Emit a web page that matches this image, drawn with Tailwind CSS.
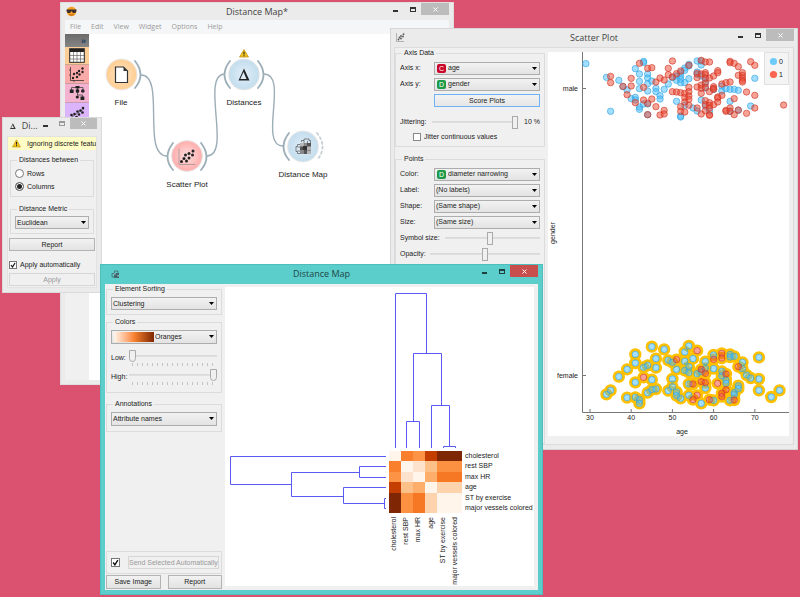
<!DOCTYPE html>
<html lang="en">
<head>
    <meta charset="UTF-8">
    <meta name="viewport" content="width=device-width, initial-scale=1.0">
    <script src="https://cdn.jsdelivr.net/npm/@tailwindcss/browser@4"></script>
    <title>Distance Map</title>
</head>
<body class="bg-[#db5170] font-['Liberation_Sans',sans-serif] text-[7px] leading-[10px] text-[#222]">
<main class="relative w-full h-screen overflow-hidden">

    <!-- Workflow window -->
    <section class="absolute left-[60px] top-[2px] w-[394px] h-[383px] bg-[#ebebeb] border border-[#dedede] flex flex-col px-1 pb-1">
        <header class="relative flex items-start justify-end h-[17px] shrink-0">
            <svg class="absolute left-[1px] top-[3px] size-[11px]" viewBox="0 0 11 11">
                <circle cx="5.500" cy="5.500" r="4.800" fill="#f5a126"/>
                <path d="M.5 3.600h10v1.200l-1 2.200H7L5.500 5 4 7H1.600L.5 4.800z" fill="#3b2f2f"/>
                <path d="M3.500 8.500q2 1.400 4 0" stroke="#a14a12" stroke-width=".8" fill="none"/>
            </svg>
            <h1 class="absolute inset-x-0 top-[3px] text-center font-['Open_Sans',sans-serif] text-[9px] leading-3 text-[#444]">Distance Map*</h1>
            <div class="relative flex">
                <button aria-label="Minimize" class="w-[17px] h-3 flex items-center justify-center"><span class="w-[5px] h-[2px] bg-[#333] mt-1"></span></button>
                <button aria-label="Maximize" class="w-[17px] h-3 flex items-center justify-center"><span class="w-[6px] h-[5px] border border-t-2 border-[#333]"></span></button>
                <button aria-label="Close" class="w-7 h-3 bg-[#bcbcbc] flex items-center justify-center"><svg class="size-[5px]" viewBox="0 0 5 5"><path d="M.5.5l4 4m0-4l-4 4" stroke="#fff"/></svg></button>
            </div>
        </header>
        <nav class="flex items-center gap-[10px] h-[14px] px-[5px] shrink-0 bg-[#f5f6f7] font-['Open_Sans',sans-serif] text-[#9b9b9b]">
            <a href="#">File</a><a href="#">Edit</a><a href="#">View</a><a href="#">Widget</a><a href="#">Options</a><a href="#">Help</a>
        </nav>
        <div class="flex flex-1 min-h-0">
            <aside class="w-6 shrink-0 bg-[#f0f0f0] flex flex-col">
                <button class="h-[13px] bg-linear-to-b from-[#6b6b6b] to-[#858585] flex items-center justify-end pr-[3px] font-bold text-[9px] text-[#1d3d63]">»</button>
                <button aria-label="Data" class="h-[18px] bg-[#fbcd97] border-b border-[#c9a98a] flex items-center justify-center">
                    <svg class="w-4 h-[15px]" viewBox="0 0 16 15"><rect x=".7" y=".7" width="14.600" height="13.600" fill="#fff" stroke="#222" stroke-width="1"/><path d="M1 1h14v3H1z" fill="#222"/><path d="M1 7.500h14M1 11h14M4.500 4v10M8 4v10M11.500 4v10" stroke="#666" stroke-width=".7"/></svg>
                </button>
                <button aria-label="Visualize" class="h-[19px] bg-[#faaaa9] border-b border-[#c99aa0] flex items-center justify-center">
                    <svg class="w-4 h-4" viewBox="0 0 16 16"><path d="M1.500 1v13.500H15M0 4h1.500M0 9h1.500M5 16v-1.500" stroke="#333" stroke-width=".8" fill="none"/><g fill="#222"><circle cx="4" cy="12" r="1.200"/><circle cx="5" cy="8" r="1.200"/><circle cx="8" cy="11" r="1.200"/><circle cx="8" cy="7" r="1.200"/><circle cx="10" cy="5" r="1.200"/><circle cx="10.500" cy="8.500" r="1.200"/><circle cx="13.500" cy="2.500" r="1.200"/><circle cx="13.500" cy="6" r="1.200"/></g></svg>
                </button>
                <button aria-label="Classify" class="h-[19px] bg-[#f3b3d0] border-b border-[#c59fb6] flex items-center justify-center">
                    <svg class="w-4 h-4" viewBox="0 0 16 16"><path d="M2.500 5V2.500H14V5M8.500 2.500V6M8.500 8v2M8 10h5.500v2" stroke="#444" stroke-width=".8" fill="none"/><g fill="#222"><rect x=".8" y="4.500" width="3.800" height="3.500"/><circle cx="8.500" cy="6" r="1.900"/><circle cx="13.800" cy="6" r="1.800"/><rect x="6.500" y="1" width="4" height="2.400"/><circle cx="8.300" cy="12" r="1.600"/><rect x="11.500" y="11.500" width="3.800" height="3.500"/></g></svg>
                </button>
                <button aria-label="Regression" class="h-[19px] bg-[#dcb4fb] flex items-center justify-center">
                    <svg class="w-4 h-4" viewBox="0 0 16 16"><path d="M1 13L15 4" stroke="#555" stroke-width=".7"/><g fill="#222"><circle cx="2.500" cy="10" r="1.300"/><circle cx="4" cy="13" r="1.300"/><circle cx="5.500" cy="9" r="1.300"/><circle cx="7.500" cy="12" r="1.300"/><circle cx="8.500" cy="6.500" r="1.300"/><circle cx="10" cy="9.500" r="1.300"/><circle cx="11.500" cy="5.500" r="1.300"/><circle cx="13.500" cy="7.500" r="1.300"/><circle cx="14" cy="3" r="1.300"/></g></svg>
                </button>
            </aside>
            <svg class="flex-1 bg-white" viewBox="89 34 360 346" preserveAspectRatio="xMinYMin slice" text-anchor="middle" font-size="8" fill="#222">
                <defs>
                    <radialGradient id="orange"><stop offset="0" stop-color="#ffe6c8"/><stop offset=".9" stop-color="#ffcf95"/><stop offset="1" stop-color="#fbd9b0"/></radialGradient>
                    <radialGradient id="red"><stop offset="0" stop-color="#ffdede"/><stop offset=".9" stop-color="#ffb1b0"/><stop offset="1" stop-color="#f8c4c4"/></radialGradient>
                    <radialGradient id="blue"><stop offset="0" stop-color="#e2eff8"/><stop offset=".9" stop-color="#c5deee"/><stop offset="1" stop-color="#d4e5f0"/></radialGradient>
                </defs>
                <g fill="none" stroke="#9caeb7" stroke-width="1.400">
                    <path d="M141 75C166 75 141 156 167 156M207 156C232 156 200 74 225 74M264 74C289 74 258 146 283 146"/>
                    <g stroke-width="1.800" stroke-linecap="round">
                        <path d="M135 61q11 14 0 27M230 61q-11 14 0 27M258 61q11 14 0 27M173 143q-11 14 0 27M201 143q11 14 0 27M289 133q-11 14 0 27"/>
                        <path d="M317 133q11 14 0 27" stroke="#c6ced3" stroke-dasharray="2 3"/>
                    </g>
                </g>
                <g stroke="#e3e3e3" stroke-width=".8">
                    <circle cx="121.500" cy="74.500" r="15.500" fill="url(#orange)"/>
                    <circle cx="244" cy="74.500" r="15.500" fill="url(#blue)"/>
                    <circle cx="187" cy="156" r="15.500" fill="url(#red)"/>
                    <circle cx="303" cy="146.500" r="15.500" fill="url(#blue)"/>
                </g>
                <path d="M115.500 67h8l4 4v11.500h-12z" fill="#fff" stroke="#333" stroke-width="1.200"/><path d="M123.500 67v4h4z" fill="#333"/>
                <path d="M244 68.500l5.500 12h-11zM243.500 72l-3.200 7h6.200z" fill="#222" fill-rule="evenodd"/>
                <path d="M244 49.500l4.500 7.500h-9z" fill="#f3c41c" stroke="#b98d0c" stroke-width=".7"/><path d="M244 51.800v2.800m0 .7v1" stroke="#222" stroke-width="1.100"/>
                <path d="M179 148.500v16h16.500" stroke="#a99" stroke-width=".9" fill="none"/>
                <g fill="#222"><circle cx="181.500" cy="161.500" r="1.500"/><circle cx="184" cy="158.500" r="1.500"/><circle cx="186.500" cy="161" r="1.500"/><circle cx="185.500" cy="155" r="1.500"/><circle cx="189" cy="153.500" r="1.500"/><circle cx="189" cy="158" r="1.500"/><circle cx="193" cy="151" r="1.500"/><circle cx="192.500" cy="155" r="1.500"/></g>
                <g>
                    <path d="M301.500 142v-1.500h2.500v-1.500h5v1.500h1.500v2.500M304 140.500v2.500M307.500 141v2M300 144.500h-2.500v2h-1.500v5h1.500v2h2.500M297.500 147h2.500M297.500 151h2.500" stroke="#666" stroke-width=".8" fill="none"/>
                    <path d="M300 143h11v11h-11z" fill="#888"/><path d="M300 143h4v3h-4zM307 147h4v3h-4zM307 151h4v3h-4z" fill="#b5b5b5"/><path d="M300 147h3v3h-3zM304 150h3v4h-3zM307 143h4v3h-4z" fill="#555"/><path d="M303 146h4v4h-4z" fill="#333"/>
                </g>
                <text x="121" y="105">File</text>
                <text x="244" y="105">Distances</text>
                <text x="187" y="187">Scatter Plot</text>
                <text x="303" y="177">Distance Map</text>
            </svg>
        </div>
    </section>

    <!-- Distances window -->
    <section class="absolute left-[2px] top-[117px] w-[100px] h-[176px] bg-[#ebebeb] border border-[#dadada] flex flex-col px-1 pb-1">
        <header class="flex items-start h-[18px] shrink-0 text-[#444]">
            <svg class="size-[6px] mt-[5px] ml-[3px]" viewBox="0 0 6 6"><path d="M3 0l3 6H0zM2.700 2L1.200 5.200h2.900z" fill="#333" fill-rule="evenodd"/></svg>
            <h2 class="ml-[6px] mt-[2px] flex-1 font-['Open_Sans',sans-serif] text-[9px] leading-3">Di...</h2>
            <button aria-label="Minimize" class="w-[17px] h-[11px] flex items-center justify-center"><span class="w-[5px] h-[2px] bg-[#333] mt-1"></span></button>
            <button aria-label="Maximize" class="w-[17px] h-[11px] flex items-center justify-center"><span class="w-[6px] h-[5px] border border-t-2 border-[#999]"></span></button>
            <button aria-label="Close" class="w-7 h-[11px] bg-[#bcbcbc] flex items-center justify-center"><svg class="size-[5px]" viewBox="0 0 5 5"><path d="M.5.5l4 4m0-4l-4 4" stroke="#fff"/></svg></button>
        </header>
        <div class="flex-1 bg-[#f0f0f0] border border-[#e2e2e2] flex flex-col">
            <p class="h-[13px] shrink-0 bg-[#fffcc6] flex items-center gap-[6px] pl-1 whitespace-nowrap overflow-hidden">
                <svg class="size-[9px] shrink-0" viewBox="0 0 9 9"><path d="M4.500.8L8.500 8h-8z" fill="#f3c41c" stroke="#b98d0c" stroke-width=".6"/><path d="M4.500 3v2.600m0 .6v1" stroke="#222"/></svg>
                Ignoring discrete featu
            </p>
            <fieldset class="mx-[2px] mt-[5px] h-[42px] border border-[#dcdcdc] px-1 pt-[2px] flex flex-col">
                <legend class="ml-[2px] px-[2px]">Distances between</legend>
                <label class="flex items-center gap-[3px] h-[13px]"><input type="radio" name="between" class="appearance-none size-[9px] rounded-full border border-[#777] bg-white checked:bg-[#222] checked:shadow-[inset_0_0_0_1px_#fff]">Rows</label>
                <label class="flex items-center gap-[3px] h-[13px]"><input type="radio" name="between" checked class="appearance-none size-[9px] rounded-full border border-[#777] bg-white checked:bg-[#222] checked:shadow-[inset_0_0_0_1px_#fff]">Columns</label>
            </fieldset>
            <fieldset class="mx-[2px] mt-[7px] h-[30px] border border-[#dcdcdc] px-1 pt-[2px]">
                <legend class="ml-[2px] px-[2px]">Distance Metric</legend>
                <div class="relative">
                    <select aria-label="Distance Metric" class="block appearance-none w-full h-[13px] border border-[#adadad] bg-linear-to-b from-[#f2f2f2] to-[#e3e3e3] px-[1px]"><option>Euclidean</option></select>
                    <svg class="absolute right-[3px] top-[5px] w-[5px] h-[3px] pointer-events-none" viewBox="0 0 5 3"><path d="M0 0h5L2.500 3z"/></svg>
                </div>
            </fieldset>
            <button class="mx-[1px] mt-1 h-[13px] shrink-0 border border-[#b4b4b4] bg-linear-to-b from-[#f2f2f2] to-[#e3e3e3]">Report</button>
            <label class="flex items-center gap-[3px] ml-[1px] mt-[9px] h-[10px]">
                <input type="checkbox" checked class="peer sr-only">
                <span class="size-2 border border-[#777] bg-white flex"><svg viewBox="0 0 6 6"><path d="M1 3l1.500 2L5 1" fill="none" stroke="#111" stroke-width="1.200"/></svg></span>Apply automatically
            </label>
            <button disabled class="mx-[1px] mt-[3px] h-[13px] shrink-0 border border-[#d6d6d6] text-[#999]">Apply</button>
        </div>
    </section>

    <!-- Scatter plot window -->
    <section class="absolute left-[390px] top-[28px] w-[408px] h-[422px] bg-[#ebebeb] border border-[#d6d6d6] flex flex-col px-[3px] pb-1">
        <header class="relative flex items-start justify-end h-[18px] shrink-0">
            <svg class="absolute left-[2px] top-1 size-[9px]" viewBox="0 0 9 9"><path d="M.5 0v8.500H8" stroke="#999" stroke-width=".7" fill="none"/><g fill="#555"><circle cx="2.500" cy="6.500" r=".9"/><circle cx="3.500" cy="4.500" r=".9"/><circle cx="5" cy="5.500" r=".9"/><circle cx="5" cy="3" r=".9"/><circle cx="7" cy="3.500" r=".9"/><circle cx="7.500" cy="1.200" r=".9"/></g></svg>
            <h2 class="absolute inset-x-0 top-[3px] text-center font-['Open_Sans',sans-serif] text-[9px] leading-3 text-[#444]">Scatter Plot</h2>
            <div class="relative flex">
                <button aria-label="Minimize" class="w-[17px] h-3 flex items-center justify-center"><span class="w-[5px] h-[2px] bg-[#333] mt-1"></span></button>
                <button aria-label="Maximize" class="w-[17px] h-3 flex items-center justify-center"><span class="w-[6px] h-[5px] border border-t-2 border-[#333]"></span></button>
                <button aria-label="Close" class="w-7 h-3 bg-[#bcbcbc] flex items-center justify-center"><svg class="size-[5px]" viewBox="0 0 5 5"><path d="M.5.5l4 4m0-4l-4 4" stroke="#fff"/></svg></button>
            </div>
        </header>
        <div class="flex flex-1 min-h-0 bg-[#f0f0f0] border border-[#dcdcdc]">
            <div class="w-[150px] shrink-0 flex flex-col gap-[7px]">
                <fieldset class="min-w-0 h-[99px] border border-[#dcdcdc] px-1 pt-[2px] flex flex-col">
                    <legend class="ml-[2px] px-[2px]">Axis Data</legend>
                    <label class="flex items-center h-4"><span class="w-[34px]">Axis x:</span>
                        <span class="relative flex-1">
                            <select class="block appearance-none w-full h-[13px] border border-[#adadad] bg-linear-to-b from-[#f2f2f2] to-[#e3e3e3] pl-[13px]"><option>age</option></select>
                            <b class="absolute left-[3px] top-[2px] size-[9px] rounded-[2px] bg-[#c9062a] text-white leading-[9px] text-center font-normal pointer-events-none">C</b>
                            <svg class="absolute right-[3px] top-[5px] w-[5px] h-[3px] pointer-events-none" viewBox="0 0 5 3"><path d="M0 0h5L2.500 3z"/></svg>
                        </span>
                    </label>
                    <label class="flex items-center h-4"><span class="w-[34px]">Axis y:</span>
                        <span class="relative flex-1">
                            <select class="block appearance-none w-full h-[13px] border border-[#adadad] bg-linear-to-b from-[#f2f2f2] to-[#e3e3e3] pl-[13px]"><option>gender</option></select>
                            <b class="absolute left-[3px] top-[2px] size-[9px] rounded-[2px] bg-[#1c9a46] text-white leading-[9px] text-center font-normal pointer-events-none">D</b>
                            <svg class="absolute right-[3px] top-[5px] w-[5px] h-[3px] pointer-events-none" viewBox="0 0 5 3"><path d="M0 0h5L2.500 3z"/></svg>
                        </span>
                    </label>
                    <button class="ml-[34px] mt-[2px] h-[13px] shrink-0 border border-[#6db3f5] bg-linear-to-b from-[#f2f2f2] to-[#e6e6e6]">Score Plots</button>
                    <label class="flex items-center h-4 mt-[7px]"><span class="w-8">Jittering:</span>
                        <input type="range" value="100" class="w-[86px] h-[15px] appearance-none bg-[linear-gradient(#d6d6d6,#e2e2e2)] bg-[length:100%_2px] bg-center bg-no-repeat [&::-webkit-slider-thumb]:appearance-none [&::-webkit-slider-thumb]:w-[6px] [&::-webkit-slider-thumb]:h-[13px] [&::-webkit-slider-thumb]:border [&::-webkit-slider-thumb]:border-[#aaa] [&::-webkit-slider-thumb]:bg-[#f0f0f0]">
                        <span class="flex-1 text-right">10 %</span>
                    </label>
                    <label class="flex items-center gap-[3px] ml-[13px] h-[14px]"><input type="checkbox" class="appearance-none size-2 border border-[#888] bg-white">Jitter continuous values</label>
                </fieldset>
                <fieldset class="min-w-0 flex-1 border border-[#dcdcdc] px-1 pt-[2px]">
                    <legend class="ml-[2px] px-[2px]">Points</legend>
                    <label class="flex items-center h-4"><span class="w-[34px]">Color:</span>
                        <span class="relative flex-1">
                            <select class="block appearance-none w-full h-[13px] border border-[#adadad] bg-linear-to-b from-[#f2f2f2] to-[#e3e3e3] pl-[13px]"><option>diameter narrowing</option></select>
                            <b class="absolute left-[3px] top-[2px] size-[9px] rounded-[2px] bg-[#1c9a46] text-white leading-[9px] text-center font-normal pointer-events-none">D</b>
                            <svg class="absolute right-[3px] top-[5px] w-[5px] h-[3px] pointer-events-none" viewBox="0 0 5 3"><path d="M0 0h5L2.500 3z"/></svg>
                        </span>
                    </label>
                    <label class="flex items-center h-4"><span class="w-[34px]">Label:</span>
                        <span class="relative flex-1">
                            <select class="block appearance-none w-full h-[13px] border border-[#adadad] bg-linear-to-b from-[#f2f2f2] to-[#e3e3e3] px-[1px]"><option>(No labels)</option></select>
                            <svg class="absolute right-[3px] top-[5px] w-[5px] h-[3px] pointer-events-none" viewBox="0 0 5 3"><path d="M0 0h5L2.500 3z"/></svg>
                        </span>
                    </label>
                    <label class="flex items-center h-4"><span class="w-[34px]">Shape:</span>
                        <span class="relative flex-1">
                            <select class="block appearance-none w-full h-[13px] border border-[#adadad] bg-linear-to-b from-[#f2f2f2] to-[#e3e3e3] px-[1px]"><option>(Same shape)</option></select>
                            <svg class="absolute right-[3px] top-[5px] w-[5px] h-[3px] pointer-events-none" viewBox="0 0 5 3"><path d="M0 0h5L2.500 3z"/></svg>
                        </span>
                    </label>
                    <label class="flex items-center h-4"><span class="w-[34px]">Size:</span>
                        <span class="relative flex-1">
                            <select class="block appearance-none w-full h-[13px] border border-[#adadad] bg-linear-to-b from-[#f2f2f2] to-[#e3e3e3] px-[1px]"><option>(Same size)</option></select>
                            <svg class="absolute right-[3px] top-[5px] w-[5px] h-[3px] pointer-events-none" viewBox="0 0 5 3"><path d="M0 0h5L2.500 3z"/></svg>
                        </span>
                    </label>
                    <label class="flex items-center h-4"><span class="w-[45px]">Symbol size:</span>
                        <input type="range" value="47" class="flex-1 min-w-0 h-[15px] appearance-none bg-[linear-gradient(#d6d6d6,#e2e2e2)] bg-[length:100%_2px] bg-center bg-no-repeat [&::-webkit-slider-thumb]:appearance-none [&::-webkit-slider-thumb]:w-[6px] [&::-webkit-slider-thumb]:h-[13px] [&::-webkit-slider-thumb]:border [&::-webkit-slider-thumb]:border-[#aaa] [&::-webkit-slider-thumb]:bg-[#f0f0f0]">
                    </label>
                    <label class="flex items-center h-4"><span class="w-[30px]">Opacity:</span>
                        <input type="range" value="50" class="flex-1 min-w-0 h-[15px] appearance-none bg-[linear-gradient(#d6d6d6,#e2e2e2)] bg-[length:100%_2px] bg-center bg-no-repeat [&::-webkit-slider-thumb]:appearance-none [&::-webkit-slider-thumb]:w-[6px] [&::-webkit-slider-thumb]:h-[13px] [&::-webkit-slider-thumb]:border [&::-webkit-slider-thumb]:border-[#aaa] [&::-webkit-slider-thumb]:bg-[#f0f0f0]">
                    </label>
                </fieldset>
            </div>
            <div class="flex-1 min-w-0 pl-[3px] pr-1 pt-1 pb-2">
                <svg class="w-full h-full bg-white" viewBox="0 0 241 384" font-size="7" fill="#222" text-anchor="middle">
                    <path d="M34.500 0v360.500H241M34 36.500h4M34 323.500h4" fill="none" stroke="#777"/>
                    <g id="ticks"></g>
                    <text x="30" y="39" text-anchor="end">male</text>
                    <text x="30" y="326" text-anchor="end">female</text>
                    <text x="134" y="382">age</text>
                    <text transform="translate(7 181) rotate(-90)">gender</text>
                    <g id="halos" fill="none" stroke="#ffc000" stroke-width="3"></g>
                    <g id="points" stroke-width=".9"></g>
                    <rect x="216.500" y=".5" width="24" height="32" fill="#f4f4f4" stroke="#e0e0e0"/>
                    <circle cx="225.500" cy="9.500" r="3.600" fill="#6ccbfb"/><circle cx="225.500" cy="22.500" r="3.600" fill="#fb6450"/>
                    <text x="233" y="12">0</text><text x="233" y="25">1</text>
                </svg>
            </div>
        </div>
    </section>

    <!-- Distance map window -->
    <section class="absolute left-[100px] top-[264px] w-[443px] h-[331px] bg-[#5bcdcb] border border-[#4fbdbb] flex flex-col px-1 pb-1">
        <header class="relative flex items-start justify-end h-[19px] shrink-0">
            <svg class="absolute left-[6px] top-[5px] size-[8px]" viewBox="0 0 8 8"><path d="M3 3h5v5H3z" fill="#41696b"/><path d="M3.500 3V1h3.500v2M3 3.500H1v3.500h2" stroke="#41696b" stroke-width=".8" fill="none"/><path d="M3 3h1.700v1.700H3zM6.300 5h1.700v1.500H6.300z" fill="#8ab"/></svg>
            <h2 class="absolute inset-x-0 top-[3px] text-center font-['Open_Sans',sans-serif] text-[9px] leading-3 text-[#1f4747]">Distance Map</h2>
            <div class="relative flex">
                <button aria-label="Minimize" class="w-[17px] h-3 flex items-center justify-center"><span class="w-[5px] h-[2px] bg-[#1e3f40] mt-1"></span></button>
                <button aria-label="Maximize" class="w-[17px] h-3 flex items-center justify-center"><span class="w-[6px] h-[5px] border border-t-2 border-[#1e3f40]"></span></button>
                <button aria-label="Close" class="w-7 h-3 bg-[#c94f4f] flex items-center justify-center"><svg class="size-[5px]" viewBox="0 0 5 5"><path d="M.5.5l4 4m0-4l-4 4" stroke="#fff"/></svg></button>
            </div>
        </header>
        <div class="flex flex-1 min-h-0 bg-[#f0f0f0] pb-[1px] pl-[1px] pr-1">
            <div class="w-[116px] shrink-0 flex flex-col">
                <fieldset class="h-[31px] shrink-0 border border-[#dcdcdc] px-1 pt-[3px]">
                    <legend class="ml-[2px] px-[2px]">Element Sorting</legend>
                    <div class="relative">
                        <select aria-label="Element Sorting" class="block appearance-none w-full h-[13px] border border-[#adadad] bg-linear-to-b from-[#f2f2f2] to-[#e3e3e3] px-[1px]"><option>Clustering</option></select>
                        <svg class="absolute right-[3px] top-[5px] w-[5px] h-[3px] pointer-events-none" viewBox="0 0 5 3"><path d="M0 0h5L2.500 3z"/></svg>
                    </div>
                </fieldset>
                <fieldset class="h-[76px] shrink-0 border border-[#dcdcdc] px-1 pt-[3px] mt-[2px]">
                    <legend class="ml-[2px] px-[2px]">Colors</legend>
                    <div class="relative">
                        <select aria-label="Colors" class="block appearance-none w-full h-[14px] border border-[#adadad] bg-linear-to-b from-[#f2f2f2] to-[#e3e3e3] pl-[43px]"><option>Oranges</option></select>
                        <span class="absolute left-[3px] top-[2px] w-10 h-[10px] bg-linear-to-r from-[#fff5eb] via-[#f98330] to-[#7f2704] pointer-events-none"></span>
                        <svg class="absolute right-[3px] top-[5px] w-[5px] h-[3px] pointer-events-none" viewBox="0 0 5 3"><path d="M0 0h5L2.500 3z"/></svg>
                    </div>
                    <label class="flex items-center h-[19px] mt-1"><span class="w-[18px]">Low:</span>
                        <span class="flex-1 flex flex-col">
                            <input type="range" value="0" class="w-full h-[13px] appearance-none bg-[linear-gradient(#d6d6d6,#e2e2e2)] bg-[length:100%_2px] bg-center bg-no-repeat [&::-webkit-slider-thumb]:appearance-none [&::-webkit-slider-thumb]:w-[7px] [&::-webkit-slider-thumb]:h-[12px] [&::-webkit-slider-thumb]:border [&::-webkit-slider-thumb]:border-[#aaa] [&::-webkit-slider-thumb]:rounded-b-[4px] [&::-webkit-slider-thumb]:bg-[#f0f0f0]">
                            <span class="h-[3px] mx-[3px] bg-[repeating-linear-gradient(90deg,#c4c4c4_0_1px,transparent_1px_5px)]"></span>
                        </span>
                    </label>
                    <label class="flex items-center h-[19px]"><span class="w-[18px]">High:</span>
                        <span class="flex-1 flex flex-col">
                            <input type="range" value="100" class="w-full h-[13px] appearance-none bg-[linear-gradient(#d6d6d6,#e2e2e2)] bg-[length:100%_2px] bg-center bg-no-repeat [&::-webkit-slider-thumb]:appearance-none [&::-webkit-slider-thumb]:w-[7px] [&::-webkit-slider-thumb]:h-[12px] [&::-webkit-slider-thumb]:border [&::-webkit-slider-thumb]:border-[#aaa] [&::-webkit-slider-thumb]:rounded-b-[4px] [&::-webkit-slider-thumb]:bg-[#f0f0f0]">
                            <span class="h-[3px] mx-[3px] bg-[repeating-linear-gradient(90deg,#c4c4c4_0_1px,transparent_1px_5px)]"></span>
                        </span>
                    </label>
                </fieldset>
                <fieldset class="h-[33px] shrink-0 border border-[#dcdcdc] px-1 pt-[3px] mt-[6px]">
                    <legend class="ml-[2px] px-[2px]">Annotations</legend>
                    <div class="relative">
                        <select aria-label="Annotations" class="block appearance-none w-full h-[14px] border border-[#adadad] bg-linear-to-b from-[#f2f2f2] to-[#e3e3e3] px-[1px]"><option>Attribute names</option></select>
                        <svg class="absolute right-[3px] top-[5px] w-[5px] h-[3px] pointer-events-none" viewBox="0 0 5 3"><path d="M0 0h5L2.500 3z"/></svg>
                    </div>
                </fieldset>
                <div class="mt-auto h-[23px] flex items-center gap-2 px-1 border border-[#dcdcdc]">
                    <label class="flex"><input type="checkbox" checked aria-label="Send automatically" class="peer sr-only"><span class="size-[9px] border border-[#777] bg-white flex"><svg viewBox="0 0 6 6"><path d="M1 3l1.500 2L5 1" fill="none" stroke="#111" stroke-width="1.200"/></svg></span></label>
                    <button disabled class="flex-1 h-[13px] border border-[#d6d6d6] text-[#999] whitespace-nowrap">Send Selected Automatically</button>
                </div>
                <div class="flex gap-[7px] mt-[1px]">
                    <button class="flex-1 h-[14px] border border-[#b4b4b4] bg-linear-to-b from-[#f2f2f2] to-[#e3e3e3]">Save Image</button>
                    <button class="flex-1 h-[14px] border border-[#b4b4b4] bg-linear-to-b from-[#f2f2f2] to-[#e3e3e3]">Report</button>
                </div>
            </div>
            <svg class="flex-1 min-w-0 mt-[3px] mb-[3px] ml-[3px] bg-white" viewBox="225 287 309 299" preserveAspectRatio="xMinYMin slice" font-size="7" fill="#222">
                <g fill="none" stroke="#5a5af5" stroke-width="1">
                    <path d="M395.500 448V293.500H426.500V353.500M413.500 421V353.500H441.500V405.500M406.500 448V421.500H419.500V448M431.500 448V405.500H449.500V446.500M443.500 448V446.500H455.500V448"/>
                    <path d="M386 456.500H230.500V484.500H291.500M359 472.500H291.500V496.500H343.500M386 466.500H359.500V477.500H386M386 487.500H343.500V503.500H384M386 498.500H384.500V508.500H386"/>
                </g>
                <g id="heatmap" shape-rendering="crispEdges"></g>
                <g id="rowLabels"></g>
                <g id="colLabels" text-anchor="end"></g>
            </svg>
        </div>
    </section>
</main>

<script>
    const NS = 'http://www.w3.org/2000/svg';
    function add(parentId, tag, attrs, text) {
        const el = document.createElementNS(NS, tag);
        for (const key in attrs) el.setAttribute(key, attrs[key]);
        if (text) el.textContent = text;
        document.getElementById(parentId).appendChild(el);
    }

    // heat map
    const names = ['cholesterol', 'rest SBP', 'max HR', 'age', 'ST by exercise', 'major vessels colored'];
    const cells = [
        ['#fff5eb', '#f97f2c', '#fd9344', '#c43e02', '#7f2704', '#7f2704'],
        ['#f97f2c', '#fff5eb', '#fde3cd', '#fdc089', '#fd9142', '#fd9142'],
        ['#fd9344', '#fde3cd', '#fff5eb', '#fdae6b', '#f67824', '#f67824'],
        ['#c43e02', '#fdc089', '#fdae6b', '#fff5eb', '#fdd3ad', '#fdd3ad'],
        ['#7f2704', '#fd9142', '#f67824', '#fdd3ad', '#fff5eb', '#fff5eb'],
        ['#7f2704', '#fd9142', '#f67824', '#fdd3ad', '#fff5eb', '#fff5eb'],
    ];
    const cw = 12.2, ch = 10.4;
    cells.forEach((row, r) => row.forEach((fill, c) => {
        add('heatmap', 'rect', { x: 388.5 + c * cw, y: 451 + r * ch, width: cw, height: ch, fill });
    }));
    names.forEach((name, i) => {
        add('rowLabels', 'text', { x: 465, y: 458 + i * ch }, name);
        add('colLabels', 'text', { transform: `translate(${396 + i * cw} 517) rotate(-90)` }, name);
    });

    // scatter plot, age -> jitter offsets inside the row
    const male = {
        blue: { 29: [113], 34: [154], 35: [256], 37: [163], 38: [182], 39: [192], 40: [218], 41: [128, 214, 222], 42: [144, 166, 188, 243, 250], 43: [106, 110, 234], 44: [144, 156, 173, 195, 234, 266], 45: [165], 46: [187, 197], 47: [209, 219], 48: [190], 49: [174], 50: [155], 51: [150, 163, 226], 52: [140, 150, 160, 170, 270, 273], 53: [126, 133, 170, 238], 54: [115, 120, 158], 55: [246], 56: [105, 138, 145, 255], 57: [105, 117, 150, 222], 58: [157, 170, 186, 240], 59: [255], 60: [190], 62: [180, 195], 63: [188], 64: [190, 226, 256], 65: [190], 66: [193, 253], 69: [240], 70: [157] },
        red: { 35: [151, 170], 38: [181], 39: [206], 40: [157, 180], 41: [230], 42: [112], 43: [184, 222], 44: [127, 232, 266], 45: [125, 219], 46: [168, 242], 47: [156, 267], 48: [162, 253, 264], 49: [127, 146], 50: [105, 153, 197], 51: [143, 198], 52: [135, 200, 242, 256], 53: [202, 215, 228, 258], 54: [118, 184, 197, 210, 220, 238], 56: [142, 155, 183, 246], 57: [103, 144, 177, 187, 202, 264], 58: [108, 140, 146, 157, 172, 184, 224, 236, 254], 59: [108, 156, 197, 230, 238, 246, 266, 268], 60: [150, 182, 187, 236, 190], 61: [134, 140, 213, 216, 228], 62: [174, 208], 63: [170, 253, 256], 64: [106, 110, 168, 246, 256], 65: [112, 218, 266], 66: [122, 148, 252], 67: [140, 148, 156, 163, 168], 68: [198, 262], 69: [107], 70: [118, 208, 246], 77: [237] },
    };
    const female = {
        blue: { 34: [193], 35: [181], 37: [140], 39: [118, 203], 41: [73, 99, 157, 202], 42: [209, 220], 43: [112], 44: [106, 188], 45: [50, 149, 179], 46: [86, 113, 177], 48: [58], 49: [91, 182], 50: [97, 147, 170], 51: [118, 186, 197], 52: [205], 53: [66, 94, 121], 54: [48, 110, 127, 162, 196], 55: [86], 56: [131], 57: [125, 220], 58: [95, 115, 174], 60: [75, 116, 211], 62: [124, 138], 63: [150, 160], 64: [73, 81, 211], 65: [79, 188, 194], 66: [167, 176], 67: [97, 116], 68: [135], 69: [144], 71: [82, 147, 181], 74: [201], 76: [181] },
        red: { 43: [142], 51: [89], 55: [162, 209], 56: [62, 196], 57: [118, 155], 58: [130, 158], 59: [209], 60: [88], 61: [160], 62: [70, 84, 190, 200], 63: [132, 179], 65: [210], 66: [110] },
    };
    const ageX = age => 42 + (age - 30) * 4.12;
    function plot(group, top, selected) {
        for (const color of ['blue', 'red']) {
            for (const age in group[color]) {
                for (const offset of group[color][age]) {
                    const cx = ageX(age), cy = top + offset / 3;
                    if (selected) add('halos', 'circle', { cx, cy, r: 4.7 });
                    add('points', 'circle', {
                        cx, cy, r: 3.2,
                        fill: color === 'blue' ? '#46beff80' : '#ed462f80',
                        stroke: color === 'blue' ? '#2fa0dcb0' : '#cf3524b0',
                    });
                }
            }
        }
    }
    plot(male, -26, false);
    plot(female, 278, true);
    for (const age of [30, 40, 50, 60, 70]) {
        add('ticks', 'text', { x: ageX(age), y: 368 }, String(age));
        add('ticks', 'path', { d: `M${ageX(age)} 357v3`, stroke: '#777' });
    }
</script>
</body>
</html>
